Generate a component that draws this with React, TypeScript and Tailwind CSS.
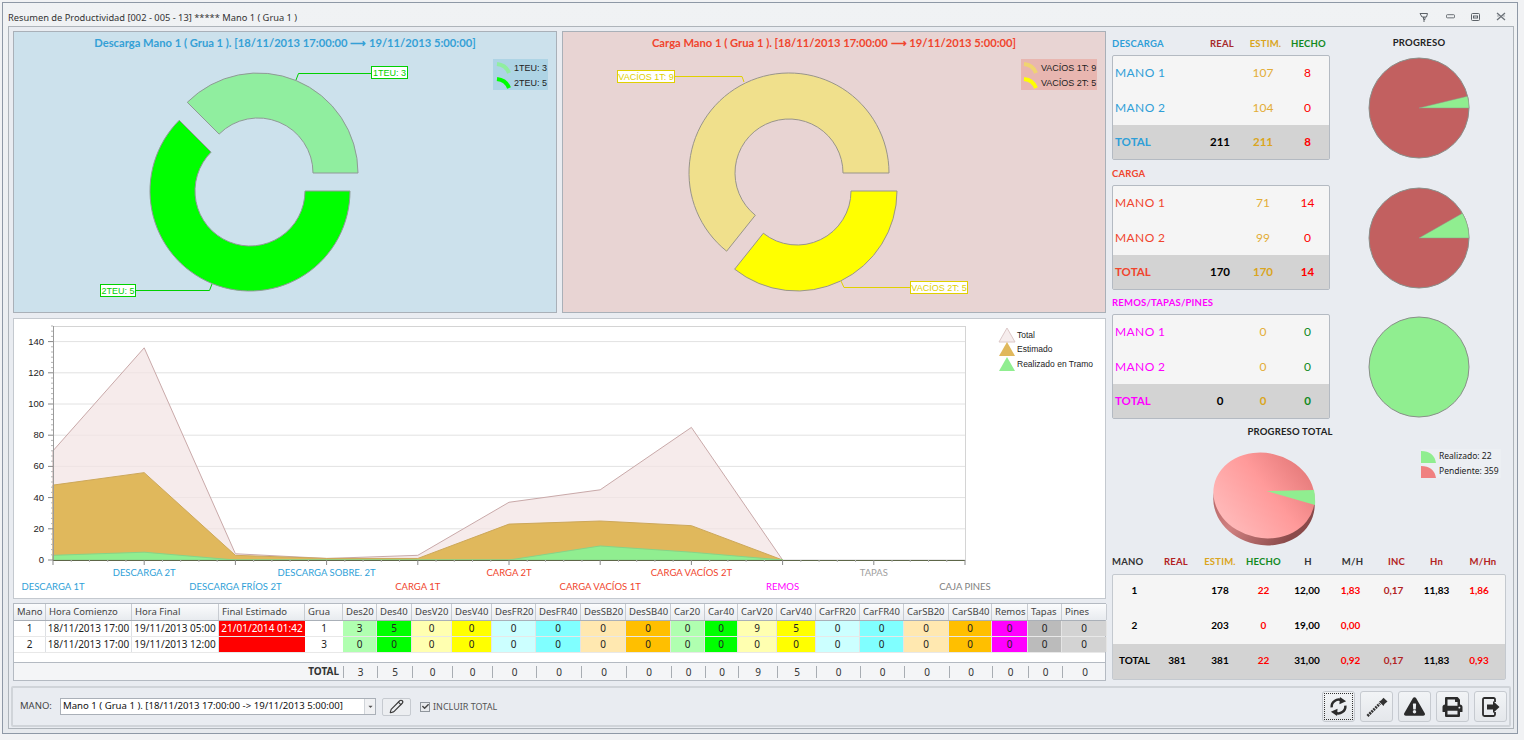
import { FaExclamationTriangle, FaPrint, FaCheck, FaCaretDown } from 'react-icons/fa'
import { Pencil } from 'lucide-react'

const GRID_COLS = 'grid grid-cols-[32px_86px_87px_86px_38px_34px_35px_40px_40px_44px_45px_45px_45px_34px_33px_39px_39px_44px_44px_45px_43px_36px_34px_45px]'
const HEADERS = ['Mano', 'Hora Comienzo', 'Hora Final', 'Final Estimado', 'Grua', 'Des20', 'Des40', 'DesV20', 'DesV40', 'DesFR20', 'DesFR40', 'DesSB20', 'DesSB40', 'Car20', 'Car40', 'CarV20', 'CarV40', 'CarFR20', 'CarFR40', 'CarSB20', 'CarSB40', 'Remos', 'Tapas', 'Pines']
const CELL_BG = ['bg-[#b0ffb0]', 'bg-[#00ff00]', 'bg-[#ffffb0]', 'bg-[#ffff00]', 'bg-[#ccffff]', 'bg-[#80ffff]', 'bg-[#ffe8b0]', 'bg-[#ffbf00]', 'bg-[#b0ffb0]', 'bg-[#00ff00]', 'bg-[#ffffb0]', 'bg-[#ffff00]', 'bg-[#ccffff]', 'bg-[#80ffff]', 'bg-[#ffe8b0]', 'bg-[#ffbf00]', 'bg-[#ff00ff]', 'bg-[#bbbbbb]', 'bg-[#d3d3d3]']
const ROW_ONE = [3, 5, 0, 0, 0, 0, 0, 0, 0, 0, 9, 5, 0, 0, 0, 0, 0, 0, 0]
const ROW_TWO = ROW_ONE.map(() => 0)

const SECTIONS = [
  { title: 'DESCARGA', titleClass: 'text-[#2f9fd8]', estim: [107, 104], hecho: [8, 0], total: [211, 211, 8], hechoClass: 'text-[#ff0000]', done: 8 / 211 },
  { title: 'CARGA', titleClass: 'text-[#f0452d]', estim: [71, 99], hecho: [14, 0], total: [170, 170, 14], hechoClass: 'text-[#ff0000]', done: 14 / 170 },
  { title: 'REMOS/TAPAS/PINES', titleClass: 'text-[#ff00ff]', estim: [0, 0], hecho: [0, 0], total: [0, 0, 0], hechoClass: 'text-[#128a1e]', done: 1 },
]

const HEAD_FONT = "font-['Lato',sans-serif]"
const GRID_FONT = "font-['Noto_Sans',sans-serif]"
const CHART_FONT = "font-['Liberation_Sans',sans-serif]"

const pt = (cx: number, cy: number, r: number, a: number) => {
  const rad = (a * Math.PI) / 180
  return `${(cx + r * Math.cos(rad)).toFixed(2)} ${(cy - r * Math.sin(rad)).toFixed(2)}`
}

// ring sector, angles counter-clockwise from east
const ring = (cx: number, cy: number, R: number, r: number, a0: number, a1: number) => {
  const large = a1 - a0 > 180 ? 1 : 0
  return `M${pt(cx, cy, R, a0)} A${R} ${R} 0 ${large} 0 ${pt(cx, cy, R, a1)} L${pt(cx, cy, r, a1)} A${r} ${r} 0 ${large} 1 ${pt(cx, cy, r, a0)} Z`
}

function Callout({ x, y, w, text, color, line }: { x: number; y: number; w: number; text: string; color: string; line: string }) {
  return (
    <g>
      <path d={line} fill="none" stroke={color} strokeWidth="1" />
      <rect x={x + 0.5} y={y + 0.5} width={w} height="12" fill="#ffffff" stroke={color} />
      <text x={x + w / 2 + 0.5} y={y + 10} textAnchor="middle" fontSize="9" fill={color}>{text}</text>
    </g>
  )
}

function DescargaDonut() {
  return (
    <svg viewBox="14 54 542 257" className={`w-[542px] h-[257px] block ${CHART_FONT}`}>
      <path d={ring(258, 173, 100, 55, 0, 135)} fill="#90ee9f" stroke="#8f9a96" />
      <path d={ring(250, 191, 100, 55, 135, 360)} fill="#00ff00" stroke="#8f9a96" />
      <Callout x={371} y={66} w={36} text="1TEU: 3" color="#00d000" line="M371 73.5 H298.5 L296 80" />
      <Callout x={100} y={284} w={35} text="2TEU: 5" color="#00d000" line="M135 290.5 H209.5 L212 284" />
      <rect x="493" y="59" width="55" height="31" fill="#aed4e5" />
      <path d="M497 64 Q506 65 509 73" fill="none" stroke="#90ee9f" strokeWidth="4" />
      <path d="M497 79 Q506 80 509 88" fill="none" stroke="#00ff00" strokeWidth="4" />
      <text x="514" y="71" fontSize="9" fill="#222">1TEU: 3</text>
      <text x="514" y="86" fontSize="9" fill="#222">2TEU: 5</text>
    </svg>
  )
}

function CargaDonut() {
  const sweep = (9 / 14) * 360
  return (
    <svg viewBox="563 54 542 257" className={`w-[542px] h-[257px] block ${CHART_FONT}`}>
      <path d={ring(789, 173, 100, 54, 0, sweep)} fill="#f0e08c" stroke="#99958a" />
      <path d={ring(797, 191, 100, 54, sweep, 360)} fill="#ffff00" stroke="#99958a" />
      <Callout x={617} y={70} w={57} text="VACÍOS 1T: 9" color="#e0d000" line="M674 76.5 H742 L744 82" />
      <Callout x={910} y={281} w={57} text="VACÍOS 2T: 5" color="#e0d000" line="M910 287.5 H844 L841 281" />
      <rect x="1021" y="59" width="76" height="31" fill="#e8b6b0" />
      <path d="M1024 64 Q1033 65 1036 73" fill="none" stroke="#f0d470" strokeWidth="4" />
      <path d="M1024 79 Q1033 80 1036 88" fill="none" stroke="#ffff00" strokeWidth="4" />
      <text x="1041" y="71" fontSize="9" fill="#222">VACÍOS 1T: 9</text>
      <text x="1041" y="86" fontSize="9" fill="#222">VACÍOS 2T: 5</text>
    </svg>
  )
}

const AREA_TOTAL = [70, 136, 4, 1, 3, 37, 45, 85, 0]
const AREA_ESTIM = [48, 56, 3, 1, 1, 23, 25, 22, 0]
const AREA_DONE = [3, 5, 0, 0, 0, 0, 9, 5, 0]
const AXIS_LABELS = [
  { t: 'DESCARGA 1T', c: '#2f9fd8', r: 1 },
  { t: 'DESCARGA 2T', c: '#2f9fd8', r: 0 },
  { t: 'DESCARGA FRÍOS 2T', c: '#2f9fd8', r: 1 },
  { t: 'DESCARGA SOBRE. 2T', c: '#2f9fd8', r: 0 },
  { t: 'CARGA 1T', c: '#f0452d', r: 1 },
  { t: 'CARGA 2T', c: '#f0452d', r: 0 },
  { t: 'CARGA VACÍOS 1T', c: '#f0452d', r: 1 },
  { t: 'CARGA VACÍOS 2T', c: '#f0452d', r: 0 },
  { t: 'REMOS', c: '#ff00ff', r: 1 },
  { t: 'TAPAS', c: '#a0a0a0', r: 0 },
  { t: 'CAJA PINES', c: '#808080', r: 1 },
]

const chartX = (i: number) => 53 + 91.2 * i
const chartY = (v: number) => 560 - 1.56 * v
const areaPath = (vals: number[]) =>
  `M${chartX(0)} 560 ` + vals.map((v, i) => `L${chartX(i)} ${chartY(v)}`).join(' ') + ` L${chartX(8)} 560 Z`

function AreaChart() {
  const major = [0, 20, 40, 60, 80, 100, 120, 140]
  const minorY = Array.from({ length: 46 }, (_, i) => (i * 20) / 6).filter(v => Math.round(v * 100) % 2000 !== 0)
  const minorX = Array.from({ length: 51 }, (_, i) => 53 + (i * 91.2) / 5)
  return (
    <svg viewBox="14 319 1091 279" className={`w-[1091px] h-[279px] block ${CHART_FONT}`}>
      <rect x="53.5" y="326.5" width="912" height="233.5" fill="#ffffff" stroke="#d4d4d4" />
      {major.slice(1).map(v => (
        <line key={v} x1="53" x2="965" y1={chartY(v)} y2={chartY(v)} stroke="#e2e2e2" strokeWidth="1" />
      ))}
      <path d={areaPath(AREA_TOTAL)} fill="#f2e3e3" fillOpacity="0.72" stroke="#c9a9a9" />
      <path d={areaPath(AREA_ESTIM)} fill="#e0b85c" stroke="#cda85a" />
      <path d={areaPath(AREA_DONE)} fill="#90ee90" stroke="#86d488" />
      <line x1="53" x2="965" y1="560.5" y2="560.5" stroke="#5d6648" />
      <line x1="53.5" x2="53.5" y1="326" y2="560" stroke="#9a9a9a" />
      {minorY.map(v => (
        <line key={v} x1="51" x2="53" y1={chartY(v)} y2={chartY(v)} stroke="#b5b5b5" />
      ))}
      {major.map(v => (
        <g key={v}>
          <line x1="48" x2="53" y1={chartY(v)} y2={chartY(v)} stroke="#888" />
          <text x="44" y={chartY(v) + 3} textAnchor="end" fontSize="9.5" fill="#222">{v}</text>
        </g>
      ))}
      {minorX.map((x, i) => (
        <line key={i} x1={x} x2={x} y1="560" y2={i % 5 === 0 ? 565 : 562} stroke={i % 5 === 0 ? '#888' : '#b5b5b5'} />
      ))}
      {AXIS_LABELS.map((l, i) => (
        <text key={l.t} x={chartX(i)} y={l.r ? 590 : 576} textAnchor="middle" fontSize="9.5" fill={l.c} className={HEAD_FONT}>{l.t}</text>
      ))}
      <path d="M999 342 L1007 328 L1015 342 Z" fill="#f6eded" stroke="#dcc8c8" />
      <path d="M999 356 L1007 342 L1015 356 Z" fill="#e0b85c" />
      <path d="M999 371 L1007 357 L1015 371 Z" fill="#90ee90" />
      <text x="1017" y="338" fontSize="8.5" fill="#222">Total</text>
      <text x="1017" y="352" fontSize="8.5" fill="#222">Estimado</text>
      <text x="1017" y="367" fontSize="8.5" fill="#222">Realizado en Tramo</text>
    </svg>
  )
}

function Pie({ done }: { done: number }) {
  if (done >= 1) {
    return (
      <svg viewBox="0 0 102 102" className="w-[102px] h-[102px] block">
        <circle cx="51" cy="51" r="50" fill="#90ee90" stroke="#8a8f8a" />
      </svg>
    )
  }
  const a = done * 360
  return (
    <svg viewBox="0 0 102 102" className="w-[102px] h-[102px] block">
      <circle cx="51" cy="51" r="50" fill="#c26060" stroke="#8a8f8a" />
      <path d={`M51 51 L101 51 A50 50 0 0 0 ${pt(51, 51, 50, a)} Z`} fill="#90ee90" stroke="#8a9a8a" strokeWidth="0.5" />
    </svg>
  )
}

function TotalPie() {
  return (
    <svg viewBox="1205 445 120 106" className="w-[120px] h-[106px] block">
      <defs>
        <linearGradient id="pieTop" x1="0" y1="1" x2="1" y2="0">
          <stop offset="0" stopColor="#ffc4c4" />
          <stop offset="0.55" stopColor="#ff9a9a" />
          <stop offset="1" stopColor="#dd7070" />
        </linearGradient>
        <linearGradient id="pieSide" x1="0" y1="0" x2="1" y2="0.4">
          <stop offset="0" stopColor="#a85a5a" />
          <stop offset="0.5" stopColor="#d08080" />
          <stop offset="1" stopColor="#8a4a4a" />
        </linearGradient>
      </defs>
      <ellipse cx="1264" cy="502" rx="51" ry="43" transform="rotate(12 1264 502)" fill="url(#pieSide)" />
      <ellipse cx="1264" cy="495.5" rx="51" ry="42.5" transform="rotate(12 1264 495.5)" fill="url(#pieTop)" />
      <path d="M1266.5 491 L1314 490 Q1315.5 497 1315 505 Z" fill="#90ee90" />
    </svg>
  )
}

function Section({ s, first }: { s: (typeof SECTIONS)[number]; first: boolean }) {
  return (
    <div className="flex">
      <div className="w-[218px]">
        <div className={`grid grid-cols-[88px_44px_43px_43px] h-[12px] mb-[6px] items-center text-[9.5px] font-bold tracking-[0.2px] ${HEAD_FONT}`}>
          <span className={`whitespace-nowrap ${s.titleClass}`}>{s.title}</span>
          {first && <span className="text-center text-[#a62a2a]">REAL</span>}
          {first && <span className="text-center text-[#daa520]">ESTIM.</span>}
          {first && <span className="text-center text-[#128a1e]">HECHO</span>}
        </div>
        <div className={`h-[105px] border border-[#b4bac2] rounded-[2px] bg-[#f5f5f5] flex flex-col text-[12px] ${HEAD_FONT}`}>
          {[0, 1].map(r => (
            <div key={r} className="grid grid-cols-[87px_40px_46px_43px] h-[34.5px] items-center">
              <span className={`pl-[2px] tracking-[0.4px] ${s.titleClass}`}>MANO {r + 1}</span>
              <span />
              <span className="text-center text-[#e3ad37]">{s.estim[r]}</span>
              <span className={`text-center ${s.hechoClass}`}>{s.hecho[r]}</span>
            </div>
          ))}
          <div className="grid grid-cols-[87px_40px_46px_43px] flex-1 items-center bg-[#d3d3d3] font-bold text-[11.5px]">
            <span className={`pl-[2px] ${s.titleClass}`}>TOTAL</span>
            <span className="text-center text-black">{s.total[0]}</span>
            <span className="text-center text-[#daa520]">{s.total[1]}</span>
            <span className={`text-center ${s.hechoClass}`}>{s.total[2]}</span>
          </div>
        </div>
      </div>
      <div className="w-[178px] flex flex-col items-center">
        <div className={`h-[12px] mb-[6px] flex items-center text-[9.5px] font-bold tracking-[0.2px] text-[#222] ${HEAD_FONT}`}>{first ? 'PROGRESO' : ''}</div>
        <div className="h-[105px] flex items-center"><Pie done={s.done} /></div>
      </div>
    </div>
  )
}

const SUMMARY_COLS = 'grid grid-cols-[43px_42px_44px_43px_44px_43px_43px_43px_42px_5px]'
const SUMMARY_ROWS = [
  ['1', '', '178', '22', '12,00', '1,83', '0,17', '11,83', '1,86'],
  ['2', '', '203', '0', '19,00', '0,00', '', '', ''],
]
const SUMMARY_TONE = ['text-black', 'text-black', 'text-black', 'text-[#ff0000]', 'text-black', 'text-[#ff0000]', 'text-[#b22222]', 'text-black', 'text-[#ff0000]']

function Summary() {
  return (
    <div className="w-[394px]">
      <div className={`${SUMMARY_COLS} h-[12px] mb-[7px] items-center text-center text-[9.5px] font-bold tracking-[0.2px] ${HEAD_FONT}`}>
        <span className="text-[#333] pr-[14px]">MANO</span>
        <span className="text-[#b22222]">REAL</span>
        <span className="text-[#daa520] pl-[2px]">ESTIM.</span>
        <span className="text-[#128a1e] pl-[2px]">HECHO</span>
        <span className="text-[#333] pl-[4px]">H</span>
        <span className="text-[#333] pl-[6px]">M/H</span>
        <span className="text-[#b22222] pl-[8px]">INC</span>
        <span className="text-[#b22222] pl-[2px]">Hn</span>
        <span className="text-[#b22222] pl-[10px]">M/Hn</span>
      </div>
      <div className={`h-[106px] border border-[#c4c9cf] rounded-[2px] bg-[#f5f5f5] flex flex-col text-[10px] font-bold ${HEAD_FONT}`}>
        {SUMMARY_ROWS.map(row => (
          <div key={row[0]} className={`${SUMMARY_COLS} h-[34.5px] pb-[3px] items-center text-center`}>
            {row.map((v, i) => <span key={i} className={SUMMARY_TONE[i]}>{v}</span>)}
          </div>
        ))}
        <div className={`${SUMMARY_COLS} flex-1 pb-[3px] items-center text-center bg-[#d3d3d3]`}>
          {['TOTAL', '381', '381', '22', '31,00', '0,92', '0,17', '11,83', '0,93'].map((v, i) => (
            <span key={i} className={SUMMARY_TONE[i]}>{v}</span>
          ))}
        </div>
      </div>
    </div>
  )
}

function ProductivityGrid() {
  const gridRow = (mano: number, start: string, end: string, est: string, grua: number, vals: number[]) => (
    <div className={`${GRID_COLS} h-[16px] items-stretch text-center text-[10px] leading-[15px] text-[#222] border-b border-[#e8e8e8]`}>
      <span className="border-r border-[#dde0e4]">{mano}</span>
      <span className="border-r border-[#dde0e4]">{start}</span>
      <span className="border-r border-[#dde0e4]">{end}</span>
      <span className="bg-[#ff0000] text-white">{est}</span>
      <span>{grua}</span>
      {vals.map((v, i) => <span key={i} className={`${CELL_BG[i]} border-r border-[#e4e4e4]`}>{v}</span>)}
    </div>
  )
  return (
    <div className={`h-[78px] w-[1093px] border border-[#b4bac2] bg-white flex flex-col ${GRID_FONT}`}>
      <div className={`${GRID_COLS} h-[17px] items-stretch text-[9.5px] leading-[16px] text-[#444] border-b border-[#aab0b8]`}>
        {HEADERS.map(h => (
          <span key={h} className="pl-[3px] bg-gradient-to-b from-[#fbfcfd] to-[#e8ebef] border-r border-[#c8ccd2] overflow-hidden whitespace-nowrap">{h}</span>
        ))}
      </div>
      {gridRow(1, '18/11/2013 17:00', '19/11/2013 05:00', '21/01/2014 01:42', 1, ROW_ONE)}
      {gridRow(2, '18/11/2013 17:00', '19/11/2013 12:00', '', 3, ROW_TWO)}
      <div className="h-[9px]" />
      <div className={`${GRID_COLS} flex-1 items-center text-center text-[10px] text-[#333] border-t border-[#b4bac2] bg-[#f4f5f7]`}>
        <span className="col-span-5 text-right pr-[4px] font-bold">TOTAL</span>
        {ROW_ONE.map((v, i) => (
          <span key={i} className="border-l border-[#a8adb3] h-[12px] leading-[12px]">{v}</span>
        ))}
      </div>
    </div>
  )
}

function ToolButton({ children, focused }: { children: React.ReactNode; focused?: boolean }) {
  return (
    <div className="w-[33px] h-[31px] rounded-[3px] border border-[#c6cad0] bg-gradient-to-b from-[#f2f4f6] to-[#e4e7eb] flex items-center justify-center text-[#2b2b2b]">
      <div className={`w-[29px] h-[27px] flex items-center justify-center ${focused ? 'border border-dotted border-[#333]' : ''}`}>{children}</div>
    </div>
  )
}

function WindowControls() {
  return (
    <div className="flex items-center">
      <svg viewBox="0 0 10 10" className="w-[10px] h-[10px] mr-[17px]" fill="none" stroke="#5c6268" strokeWidth="1">
        <path d="M1 1.5 H8.5 L7.5 5 H3 Z M4.5 5 V7.5 H6 V5 M4 9 H6" />
      </svg>
      <svg viewBox="0 0 10 5" className="w-[9px] h-[5px] mr-[16px]" fill="none" stroke="#5c6268"><rect x="0.5" y="0.5" width="9" height="3.5" rx="1" /></svg>
      <svg viewBox="0 0 9 8" className="w-[9px] h-[8px] mr-[16px]" fill="none" stroke="#5c6268"><rect x="0.5" y="0.5" width="8" height="7" rx="1" /><rect x="2.5" y="3" width="4" height="2" /></svg>
      <svg viewBox="0 0 10 9" className="w-[10px] h-[9px] mr-[11px]" fill="none" stroke="#6b7177" strokeWidth="1.3"><path d="M1 1 L9 8 M9 1 L1 8" /><path d="M1 4 H3 M7 4 H9" strokeWidth="0.6" /></svg>
    </div>
  )
}

export default function App() {
  return (
    <div className="w-[1524px] h-[740px] overflow-hidden bg-[#f1f2f4] pt-[2px] pl-[2px]">
      <div className="w-[1516px] h-[732px] border border-[#8e98a6] bg-gradient-to-b from-[#f0f2f4] to-[#e6e9ed] flex flex-col">
        <div className="h-[23px] flex items-center justify-between pl-[5px] shrink-0">
          <span className={`text-[9.3px] text-[#333] pt-[6px] ${GRID_FONT}`}>Resumen de Productividad [002 - 005 - 13] ***** Mano 1 ( Grua 1 )</span>
          <div className="pt-[4px]"><WindowControls /></div>
        </div>
        <div className="ml-[5px] w-[1506px] h-[703px] border border-[#aeb4ba] bg-[#e9ecf1] px-[2px] pt-[4px]">
          <div className="flex ml-[2px] h-[650px]">
            <div className="w-[1093px] flex flex-col">
              <div className="flex gap-[5px]">
                <div className="w-[544px] h-[282px] border border-[#a9b0b8] bg-[#cce1ec]">
                  <div className={`h-[22px] pt-[4px] text-center text-[11.2px] font-bold leading-[14px] text-[#35a0d6] ${HEAD_FONT}`}>Descarga Mano 1 ( Grua 1 ). [18/11/2013 17:00:00 ⟶ 19/11/2013 5:00:00]</div>
                  <DescargaDonut />
                </div>
                <div className="w-[544px] h-[282px] border border-[#a9b0b8] bg-[#e8d4d3]">
                  <div className={`h-[22px] pt-[4px] text-center text-[11.2px] font-bold leading-[14px] text-[#f0452d] ${HEAD_FONT}`}>Carga Mano 1 ( Grua 1 ). [18/11/2013 17:00:00 ⟶ 19/11/2013 5:00:00]</div>
                  <CargaDonut />
                </div>
              </div>
              <div className="mt-[5px] h-[281px] border border-[#c4c9cf] bg-white">
                <AreaChart />
              </div>
              <div className="mt-[4px]"><ProductivityGrid /></div>
            </div>
            <div className="ml-[6px] w-[396px] flex flex-col">
              <div className="pt-[6px]"><Section s={SECTIONS[0]} first /></div>
              <div className="pt-[7px]"><Section s={SECTIONS[1]} first={false} /></div>
              <div className="pt-[6px]"><Section s={SECTIONS[2]} first={false} /></div>
              <div className={`mt-[7px] h-[12px] w-[356px] flex items-center justify-center text-[9.5px] font-bold tracking-[0.2px] text-[#222] ${HEAD_FONT}`}>PROGRESO TOTAL</div>
              <div className="flex h-[117px]">
                <div className="ml-[93px] pt-[7px]"><TotalPie /></div>
                <div className={`ml-[96px] mt-[11px] w-[80px] h-[29px] bg-[#eceff3] text-[8.5px] text-[#222] ${GRID_FONT}`}>
                  <div className="flex items-center h-[15px] whitespace-nowrap">
                    <svg viewBox="0 0 15 12" className="w-[15px] h-[12px] mr-[3px]"><path d="M0 0 Q13 0 15 12 H0 Z" fill="#90ee90" /></svg>Realizado: 22
                  </div>
                  <div className="flex items-center h-[15px] whitespace-nowrap">
                    <svg viewBox="0 0 15 12" className="w-[15px] h-[12px] mr-[3px]"><path d="M0 0 Q13 0 15 12 H0 Z" fill="#f08080" /></svg>Pendiente: 359
                  </div>
                </div>
              </div>
              <Summary />
            </div>
          </div>
          <div className={`mt-[5px] w-[1500px] h-[41px] border-2 border-[#d0d4d9] rounded-[2px] bg-[#e9ecf1] flex items-center pl-[7px] pr-[2px] ${GRID_FONT}`}>
            <span className="w-[40px] text-[9.5px] text-[#444]">MANO:</span>
            <div className="w-[316px] h-[17px] border border-[#aab0b8] bg-white flex items-center text-[9.6px] text-[#111] pl-[2px] relative">
              <span className="whitespace-nowrap flex-1">Mano 1 ( Grua 1 ). [18/11/2013 17:00:00 -&gt; 19/11/2013 5:00:00]</span>
              <span className="w-[11px] h-full border-l border-[#d0d4d9] bg-[#f0f1f3] flex items-center justify-center"><FaCaretDown className="w-[7px] h-[7px] text-[#555]" /></span>
            </div>
            <div className="ml-[6px] w-[29px] h-[18px] rounded-[2px] border border-[#c6cad0] bg-[#eceef1] flex items-center justify-center"><Pencil className="w-[15px] h-[15px] text-[#3a3a3a]" strokeWidth={1.8} /></div>
            <div className="ml-[9px] w-[10px] h-[10px] border border-[#8f959c] bg-[#e8eaed] flex items-center justify-center"><FaCheck className="w-[7px] h-[7px] text-[#444]" /></div>
            <span className="ml-[3px] text-[9px] text-[#555]">INCLUIR TOTAL</span>
            <div className="ml-auto flex gap-[5px]">
              <ToolButton focused>
                <svg viewBox="0 0 20 20" className="w-[19px] h-[19px]">
                  <g>
                    <path d="M2.8 11 A7.4 7.4 0 0 1 13.5 3.6" fill="none" stroke="#2b2b2b" strokeWidth="2.6" />
                    <path d="M11.5 0 L18 4.4 L11 7.6 Z" fill="#2b2b2b" />
                  </g>
                  <g transform="rotate(180 10 10)">
                    <path d="M2.8 11 A7.4 7.4 0 0 1 13.5 3.6" fill="none" stroke="#2b2b2b" strokeWidth="2.6" />
                    <path d="M11.5 0 L18 4.4 L11 7.6 Z" fill="#2b2b2b" />
                  </g>
                </svg>
              </ToolButton>
              <ToolButton>
                <svg viewBox="0 0 22 20" className="w-[22px] h-[20px]">
                  <path d="M1.5 19 L14 6.5" stroke="#333" strokeWidth="2.8" strokeDasharray="2 0.8" />
                  <path d="M13 4.5 L17.5 9 L18.5 7 L21.5 4.5 L17.5 0.8 L15 3.4 Z" fill="#333" />
                </svg>
              </ToolButton>
              <ToolButton><FaExclamationTriangle className="w-[21px] h-[19px]" /></ToolButton>
              <ToolButton><FaPrint className="w-[21px] h-[20px]" /></ToolButton>
              <ToolButton>
                <svg viewBox="0 0 18 20" className="w-[18px] h-[20px]">
                  <path d="M13 5 V2.5 Q13 1 11.5 1 H2.5 Q1 1 1 2.5 V17.5 Q1 19 2.5 19 H11.5 Q13 19 13 17.5 V15" fill="none" stroke="#2b2b2b" strokeWidth="1.8" />
                  <path d="M5 7.5 H11 V4 L17.5 10 L11 16 V12.5 H5 Z" fill="#2b2b2b" />
                </svg>
              </ToolButton>
            </div>
          </div>
        </div>
      </div>
    </div>
  )
}
